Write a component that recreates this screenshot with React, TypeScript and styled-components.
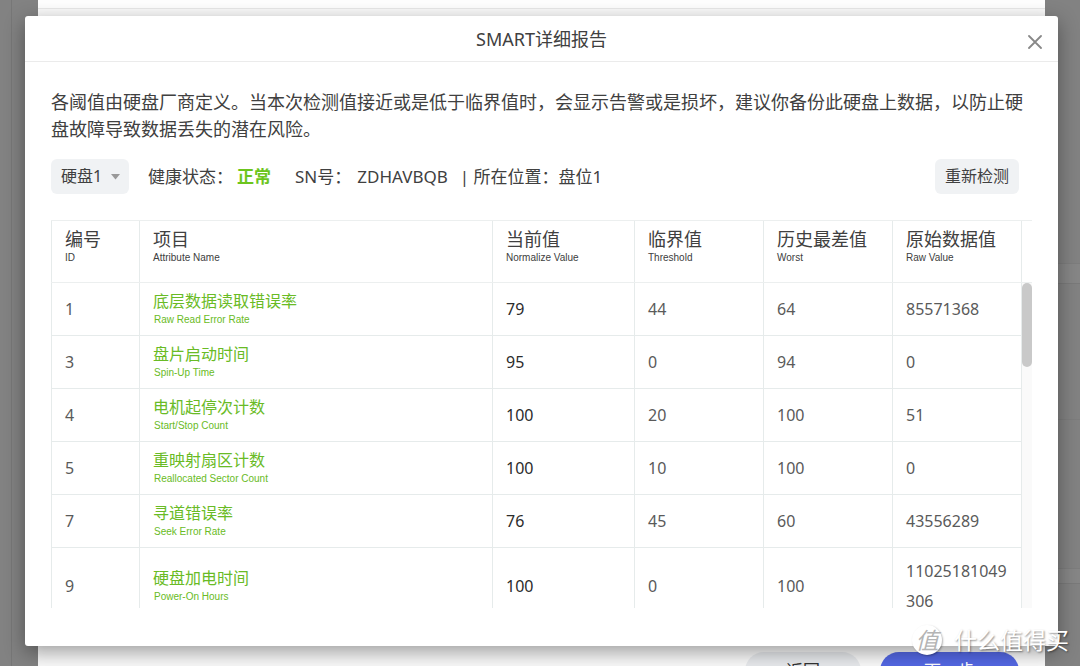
import React from "react";
import styled, { createGlobalStyle } from "styled-components";

const GlobalStyle = createGlobalStyle`
  *, *::before, *::after { box-sizing: border-box; }
  body {
    margin: 0;
    overflow: hidden;
    background: #828282;
    color: #404040;
    font-family: "Noto Sans", "Noto Sans CJK SC", sans-serif;
  }
  button, select { font: inherit; color: inherit; border: 0; cursor: pointer; }
`;

const Page = styled.div`
  display: grid;
  grid-template-columns: 12px minmax(0, 1fr);
  height: 100vh;
  overflow: hidden;
`;

const SideRail = styled.div`
  grid-area: 1 / 1;
  border-right: 1px solid #777;
`;

const EdgeColumn = styled.div`
  grid-area: 1 / 1 / 2 / 3;
  justify-self: end;
  display: flex;
  flex-direction: column;
  width: 34px;
`;

const EdgeBlock = styled.div<{ $height: number; $light?: boolean }>`
  flex: none;
  height: ${(p) => p.$height}px;
  border-bottom: 1px solid ${(p) => (p.$light ? "#7a7a7a" : "#7d7d7d")};
  background: ${(p) => (p.$light ? "#868686" : "#828282")};
`;

const BackPanel = styled.div`
  grid-area: 1 / 1 / 2 / 3;
  z-index: 1;
  display: flex;
  flex-direction: column;
  justify-content: space-between;
  margin: 0 35px 0 38px;
  background: #fafafa;
`;

const BackHeader = styled.div`
  height: 9px;
  border-bottom: 1px solid #e9e9e9;
  background: #fefefe;
`;

const BackFooter = styled.div`
  display: flex;
  justify-content: flex-end;
  gap: 19px;
  padding: 0 26px 16px;
`;

const PillButton = styled.button<{ $primary?: boolean }>`
  width: ${(p) => (p.$primary ? 139 : 116)}px;
  height: 38px;
  padding: 0;
  border-radius: 19px;
  background: ${(p) => (p.$primary ? "#5468e4" : "#e8eaed")};
  color: ${(p) => (p.$primary ? "#fff" : "#333")};
  font-size: 17px;
  line-height: 38px;
`;

const Dialog = styled.section`
  grid-area: 1 / 1 / 2 / 3;
  align-self: start;
  z-index: 2;
  margin: 16px 22px 60px 25px;
  border-radius: 3px;
  background: #fff;
  box-shadow: 0 6px 20px rgba(0, 0, 0, 0.38);
`;

const DialogHeader = styled.header`
  display: grid;
  grid-template-columns: 46px 1fr 46px;
  align-items: center;
  height: 46px;
  border-bottom: 1px solid #ebebeb;
`;

const Title = styled.h1`
  grid-column: 2;
  margin: 0;
  text-align: center;
  font-size: 18px;
  font-weight: 400;
  line-height: 26px;
`;

const CloseButton = styled.button`
  display: grid;
  place-items: center;
  width: 46px;
  height: 46px;
  padding: 6px 0 0;
  background: none;
  color: #888;
`;

const DialogBody = styled.div`
  padding: 27px 26px 38px;
`;

const Notice = styled.p`
  margin: 0 0 16px;
  font-size: 18px;
  line-height: 27px;
`;

const Toolbar = styled.div`
  display: flex;
  align-items: center;
  margin-bottom: 26px;
  padding-right: 13px;
  font-size: 17px;
  line-height: 35px;
  white-space: nowrap;
`;

const SelectBox = styled.div`
  display: grid;
  align-items: center;
  width: 78px;
  margin-right: 19px;
  svg {
    grid-area: 1 / 1;
    justify-self: end;
    margin-right: 9px;
    pointer-events: none;
  }
`;

const DiskSelect = styled.select`
  grid-area: 1 / 1;
  appearance: none;
  width: 100%;
  height: 35px;
  padding: 0 0 0 10px;
  border-radius: 6px;
  background: #f0f2f4;
  font-size: 16px;
`;

const Facts = styled.dl`
  display: flex;
  flex: 1;
  margin: 0;
`;

const Fact = styled.div<{ $gap: number; $after: number }>`
  display: flex;
  gap: ${(p) => p.$gap}px;
  margin-right: ${(p) => p.$after}px;
  dt, dd { margin: 0; }
`;

const Healthy = styled.dd`
  color: #6cc51d;
  font-weight: 700;
`;

const RetestButton = styled.button`
  height: 35px;
  padding: 0 10px;
  border-radius: 6px;
  background: #f0f2f4;
  font-size: 16px;
  line-height: 35px;
`;

const HeadArea = styled.div`
  padding-right: 10px;
  border: solid #ecefef;
  border-width: 1px 0;
`;

const Table = styled.table`
  width: 100%;
  table-layout: fixed;
  border-collapse: separate;
  border-spacing: 0;
  border-left: 1px solid #e6ebeb;
`;

const HeadCell = styled.th`
  padding: 8px 0 17px 13px;
  border-right: 1px solid #e6ebeb;
  text-align: left;
  font-size: 18px;
  font-weight: 400;
  line-height: 20px;
  white-space: nowrap;
`;

const Cell = styled.td<{ $strong?: boolean }>`
  height: 53px;
  padding: 8px 13px;
  border: solid #e6ebeb;
  border-width: 0 1px 1px 0;
  color: ${(p) => (p.$strong ? "#2c2c2c" : "#5a5a5a")};
  font-size: 16px;
  line-height: 30px;
  word-break: break-all;
`;

const NameCell = styled(Cell)`
  color: #69bb25;
  line-height: 20px;
`;

const English = styled.span<{ $inset?: boolean }>`
  display: block;
  padding-left: ${(p) => (p.$inset ? 1 : 0)}px;
  font-family: "Liberation Sans", Arial, sans-serif;
  font-size: 10px;
  line-height: 17px;
  margin-bottom: -1px;
`;

const ScrollArea = styled.div`
  display: flex;
  height: 325px;
`;

const Rows = styled.div`
  flex: 1;
  overflow: hidden auto;
  scrollbar-width: none;
`;

const Track = styled.div`
  width: 10px;
  background: #fafafa;
`;

const Thumb = styled.div`
  height: 84px;
  border-radius: 5px;
  background: #c9c9c9;
`;

const Watermark = styled.div`
  position: absolute;
  right: 11px;
  bottom: 11px;
  z-index: 3;
  display: flex;
  align-items: center;
  gap: 12px;
  color: #fff;
  font-size: 23px;
  line-height: 30px;
  text-shadow: 1px 1px 2px rgba(0, 0, 0, 0.45);
`;

const WatermarkBadge = styled.span`
  width: 30px;
  height: 30px;
  border-radius: 50%;
  background: #fff;
  box-shadow: 1px 1px 2px rgba(0, 0, 0, 0.3);
  color: #b4b4b4;
  text-align: center;
  text-shadow: none;
  font-style: italic;
`;

const columns = [
  ["编号", "ID"],
  ["项目", "Attribute Name"],
  ["当前值", "Normalize Value"],
  ["临界值", "Threshold"],
  ["历史最差值", "Worst"],
  ["原始数据值", "Raw Value"],
];

const rows = [
  { id: 1, name: "底层数据读取错误率", en: "Raw Read Error Rate", now: 79, limit: 44, worst: 64, raw: "85571368" },
  { id: 3, name: "盘片启动时间", en: "Spin-Up Time", now: 95, limit: 0, worst: 94, raw: "0" },
  { id: 4, name: "电机起停次计数", en: "Start/Stop Count", now: 100, limit: 20, worst: 100, raw: "51" },
  { id: 5, name: "重映射扇区计数", en: "Reallocated Sector Count", now: 100, limit: 10, worst: 100, raw: "0" },
  { id: 7, name: "寻道错误率", en: "Seek Error Rate", now: 76, limit: 45, worst: 60, raw: "43556289" },
  { id: 9, name: "硬盘加电时间", en: "Power-On Hours", now: 100, limit: 0, worst: 100, raw: "11025181049306" },
];

const Col = styled.col<{ $width?: number }>`
  width: ${(p) => (p.$width ? `${p.$width}px` : "auto")};
`;

const Columns = () => (
  <colgroup>
    <Col $width={88} />
    <Col />
    <Col $width={142} />
    <Col $width={129} />
    <Col $width={129} />
    <Col $width={129} />
  </colgroup>
);

export default function App() {
  return (
    <Page lang="zh-CN">
      <GlobalStyle />
      <SideRail />
      <EdgeColumn>
        <EdgeBlock $height={264} />
        <EdgeBlock $height={20} $light />
        <EdgeBlock $height={136} />
        <EdgeBlock $height={149} />
        <EdgeBlock $height={15} $light />
      </EdgeColumn>
      <BackPanel>
        <BackHeader />
        <BackFooter>
          <PillButton>返回</PillButton>
          <PillButton $primary>下一步</PillButton>
        </BackFooter>
      </BackPanel>

      <Dialog role="dialog" aria-labelledby="report-title">
        <DialogHeader>
          <Title id="report-title">SMART详细报告</Title>
          <CloseButton aria-label="关闭">
            <svg width="14" height="14" viewBox="0 0 14 14" stroke="currentColor" strokeWidth="1.8" strokeLinecap="round">
              <path d="M1 1l12 12M13 1L1 13" />
            </svg>
          </CloseButton>
        </DialogHeader>

        <DialogBody>
          <Notice>
            各阈值由硬盘厂商定义。当本次检测值接近或是低于临界值时，会显示告警或是损坏，建议你备份此硬盘上数据，以防止硬盘故障导致数据丢失的潜在风险。
          </Notice>

          <Toolbar>
            <SelectBox>
              <DiskSelect aria-label="硬盘">
                <option>硬盘1</option>
              </DiskSelect>
              <svg width="9" height="6" viewBox="0 0 9 6" fill="#999">
                <path d="M0 0h9L4.5 5.5z" />
              </svg>
            </SelectBox>
            <Facts>
              <Fact $gap={4} $after={24}>
                <dt>健康状态：</dt>
                <Healthy>正常</Healthy>
              </Fact>
              <Fact $gap={6} $after={12}>
                <dt>SN号：</dt>
                <dd>ZDHAVBQB</dd>
              </Fact>
              <Fact $gap={0} $after={0}>
                <dt>| 所在位置：</dt>
                <dd>盘位1</dd>
              </Fact>
            </Facts>
            <RetestButton>重新检测</RetestButton>
          </Toolbar>

          <HeadArea>
            <Table>
              <Columns />
              <thead>
                <tr>
                  {columns.map(([label, en]) => (
                    <HeadCell key={en} scope="col">
                      {label}
                      <English>{en}</English>
                    </HeadCell>
                  ))}
                </tr>
              </thead>
            </Table>
          </HeadArea>
          <ScrollArea>
            <Rows>
              <Table>
                <Columns />
                <tbody>
                  {rows.map((r) => (
                    <tr key={r.id}>
                      <Cell>{r.id}</Cell>
                      <NameCell>
                        {r.name}
                        <English $inset>{r.en}</English>
                      </NameCell>
                      <Cell $strong>{r.now}</Cell>
                      <Cell>{r.limit}</Cell>
                      <Cell>{r.worst}</Cell>
                      <Cell>{r.raw}</Cell>
                    </tr>
                  ))}
                </tbody>
              </Table>
            </Rows>
            <Track>
              <Thumb />
            </Track>
          </ScrollArea>
        </DialogBody>
      </Dialog>

      <Watermark>
        <WatermarkBadge>值</WatermarkBadge>
        什么值得买
      </Watermark>
    </Page>
  );
}
